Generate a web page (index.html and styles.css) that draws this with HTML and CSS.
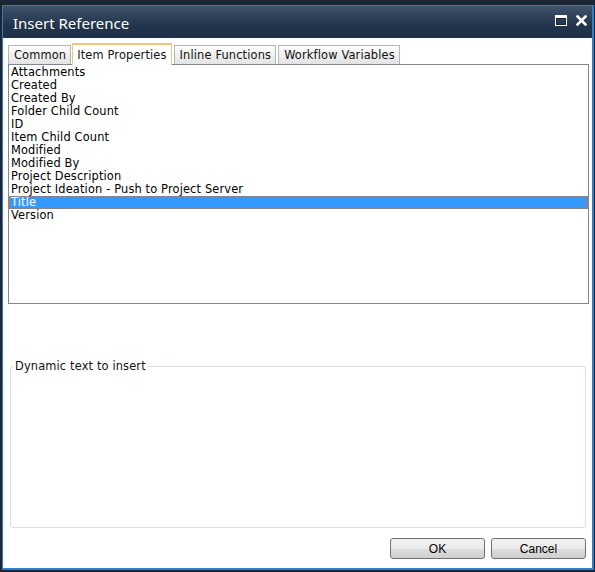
FILE: index.html
```html
<!DOCTYPE html>
<html>
<head>
<meta charset="utf-8">
<link rel="stylesheet" href="styles.css">
</head>
<body>
<div class="dialog">
  <div class="titlebar">
    <span class="title">Insert Reference</span>
    <span class="tools">
      <svg class="ico" width="12" height="11" viewBox="0 0 12 11"><rect x="0.5" y="0.5" width="11" height="10" fill="none" stroke="#fff"/><rect x="1" y="1" width="10" height="2" fill="#fff"/><rect x="1.5" y="3.5" width="9" height="6" fill="none" stroke="#1a2636"/></svg>
      <svg class="ico" width="11" height="11" viewBox="0 0 11 11"><path d="M1.5 1.5 L9.5 9.5 M9.5 1.5 L1.5 9.5" stroke="#fff" stroke-width="2.6" stroke-linecap="square"/></svg>
    </span>
  </div>
  <div class="content">
    <div class="tabs">
      <div class="tab">Common</div>
      <div class="tab sel">Item Properties</div>
      <div class="tab">Inline Functions</div>
      <div class="tab">Workflow Variables</div>
    </div>
    <div class="list">
      <div class="item">Attachments</div>
      <div class="item">Created</div>
      <div class="item">Created By</div>
      <div class="item">Folder Child Count</div>
      <div class="item">ID</div>
      <div class="item">Item Child Count</div>
      <div class="item">Modified</div>
      <div class="item">Modified By</div>
      <div class="item">Project Description</div>
      <div class="item">Project Ideation - Push to Project Server</div>
      <div class="item active">Title</div>
      <div class="item">Version</div>
    </div>
    <fieldset class="dyn">
      <legend>Dynamic text to insert</legend>
    </fieldset>
    <div class="buttons">
      <button class="btn">OK</button>
      <button class="btn">Cancel</button>
    </div>
  </div>
</div>
</body>
</html>
```
FILE: styles.css
```css
html, body {
  margin: 0;
  padding: 0;
  background: #1b2636;
  width: 595px;
  height: 572px;
  overflow: hidden;
}
.dialog {
  margin: 5px 0 0 2px;
  width: 589px;
  height: 562px;
  border: 1px solid #2a7fd0;
  border-bottom-width: 2px;
  border-right-width: 2px;
  display: flex;
  flex-direction: column;
  background: #fff;
}
.titlebar {
  height: 32px;
  background: linear-gradient(#3f536b, #22354c 60%, #1f3148);
  display: flex;
  align-items: center;
  justify-content: space-between;
  padding: 0 5px 0 10px;
}
.title {
  color: #fff;
  font-family: "Noto Sans", "DejaVu Sans", sans-serif;
  font-size: 15px;
  margin-top: 2px;
}
.tools {
  display: flex;
  gap: 9px;
  align-items: center;
  margin-top: -4px;
}
.content {
  flex: 1;
  display: flex;
  flex-direction: column;
  padding: 4px 3px 0 5px;
  font-family: "DejaVu Sans", Verdana, sans-serif;
  font-size: 11.4px;
  letter-spacing: 0.15px;
  color: #000;
}
.tabs {
  display: flex;
  align-items: flex-end;
  gap: 2px;
  height: 22px;
}
.tab {
  height: 19px;
  line-height: 18px;
  padding: 0 4px 0 5px;
  border: 1px solid #b5b5b5;
  border-bottom: none;
  background: linear-gradient(#fdfdfd, #e3e3e3);
  color: #111;
  box-sizing: border-box;
}
.tab:first-child { margin-right: -1px; }
.tab.sel {
  height: 22px;
  line-height: 20px;
  background: #fff;
  border-color: #e9c784;
  border-top: 2px solid #f0c577;
  margin-bottom: -1px;
  position: relative;
  z-index: 1;
  padding: 0 4px;
}
.list {
  height: 237px;
  border: 1px solid #828790;
  padding: 1px 0 0 0;
  background: #fff;
}
.item {
  height: 13px;
  line-height: 13px;
  padding-left: 2px;
  white-space: nowrap;
}
.item.active {
  background: #3399ff;
  color: #fff;
  outline: 1px dotted #d96b1c;
  outline-offset: -1px;
}
.dyn {
  margin: 55px 3px 0 2px;
  height: 169px;
  box-sizing: border-box;
  border: 1px solid #d5dfe5;
  border-radius: 3px;
  padding: 0;
}
.dyn legend {
  margin-left: 3px;
  padding: 0 1px;
  color: #111;
}
.buttons {
  display: flex;
  justify-content: flex-end;
  gap: 6px;
  margin-top: 10px;
  padding-right: 3px;
}
.btn {
  width: 95px;
  height: 21px;
  border: 1px solid #707070;
  border-radius: 3px;
  background: linear-gradient(#f2f2f2 0%, #ebebeb 50%, #dddddd 51%, #cfcfcf 100%);
  font-family: "Liberation Sans", Arial, sans-serif;
  font-size: 12px;
  letter-spacing: 0;
  color: #000;
  padding: 0;
}
```
